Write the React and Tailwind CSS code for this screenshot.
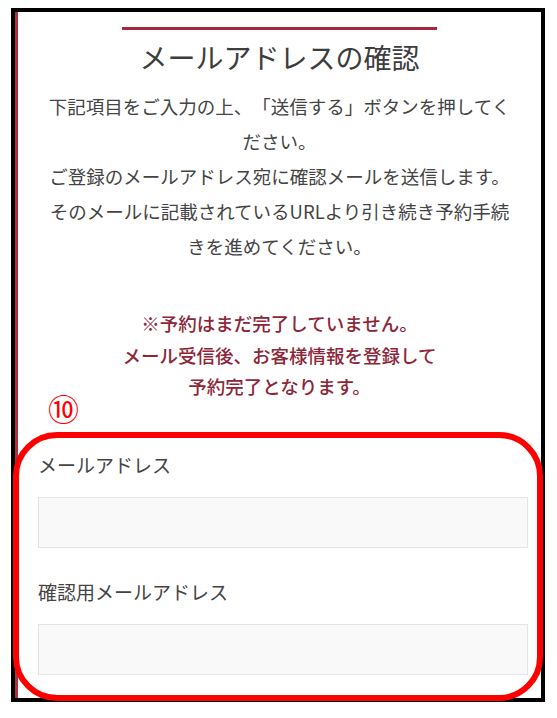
const jp = { fontFamily: '"Noto Sans CJK JP", "Noto Sans", sans-serif' };

const bodyLines = [
    "下記項目をご入力の上、「送信する」ボタンを押してく",
    "ださい。",
    "ご登録のメールアドレス宛に確認メールを送信します。",
    "そのメールに記載されているURLより引き続き予約手続",
    "きを進めてください。",
];

const noticeLines = [
    "※予約はまだ完了していません。",
    "メール受信後、お客様情報を登録して",
    "予約完了となります。",
];

function Field({ label, gapTop }) {
    return (
        <div className={gapTop}>
            <div className="ml-[20px] text-[19px] leading-[28px] text-[#444444]">{label}</div>
            <input type="email" className="mt-[18px] ml-[20px] block h-[51px] w-[490px] border border-[#e4e4e4] bg-[#f9f9f9] outline-none" />
        </div>
    );
}

export default function App() {
    return (
        <div className="min-h-screen w-full bg-white [text-spacing-trim:space-all]" style={jp}>
            <div className="ml-[11px] pt-[8px]">
                <div className="relative h-[694px] w-[534px] border-4 border-black">
                    <div className="h-full border-l-[3px] border-[#b03040]">
                        <div className="flex flex-col items-center">
                            <div className="mt-[15px] h-[3px] w-[315px] bg-[#a8283b]"></div>
                            <h1 className="mt-[7px] text-[28px] leading-[40px] text-[#3d3d3d]">メールアドレスの確認</h1>
                            <div className="mt-[12px] flex flex-col items-center text-[18.5px] leading-[35px] text-[#444444]">
                                {bodyLines.map((line) => (
                                    <div key={line} className="whitespace-nowrap">{line}</div>
                                ))}
                            </div>
                            <div className="mt-[44px] flex flex-col items-center text-[18.5px] font-medium leading-[31.5px] text-[#8c2638]">
                                {noticeLines.map((line) => (
                                    <div key={line} className="whitespace-nowrap">{line}</div>
                                ))}
                            </div>
                        </div>
                        <div className="mt-[48px]">
                            <Field label="メールアドレス" />
                            <Field label="確認用メールアドレス" gapTop="mt-[30px]" />
                        </div>
                    </div>

                    {/* annotation overlay */}
                    <div className="absolute left-[33px] top-[380px] text-[31px] leading-none text-[#ff0000]">⑩</div>
                    <div className="pointer-events-none absolute left-[-2px] right-[-2px] top-[420px] bottom-[-3px] rounded-[44px] border-[6px] border-[#ff0000]"></div>
                </div>
            </div>
        </div>
    );
}
